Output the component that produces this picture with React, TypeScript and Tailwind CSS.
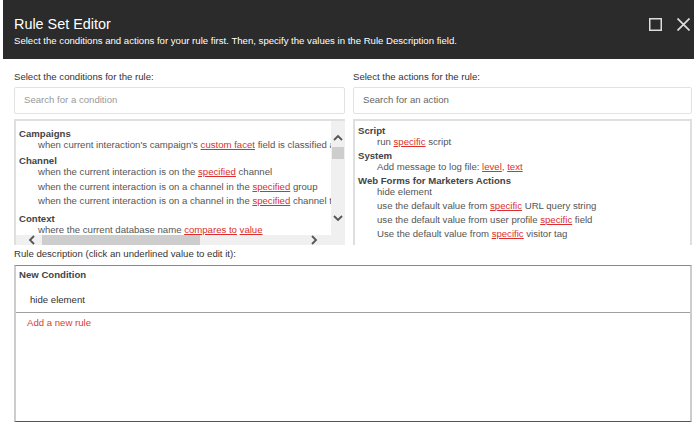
import { ReactNode } from 'react';

function Val({ children }: { children: ReactNode }) {
    return <span className="text-[#dc2f2f] underline underline-offset-1">{children}</span>;
}

function Group({ title, className, children }: { title: string; className?: string; children: ReactNode }) {
    return (
        <div className={className}>
            <div className="font-bold leading-[11px] text-[#444]">{title}</div>
            {children}
        </div>
    );
}

function Row({ className, children }: { className?: string; children: ReactNode }) {
    return <div className={`pl-[19px] leading-[11px] whitespace-nowrap ${className ?? 'mb-[3.5px]'}`}>{children}</div>;
}

// Scrollbar arrows: wide, flat chevrons
function Arrow({ points, className }: { points: string; className?: string }) {
    return (
        <svg width="10" height="10" viewBox="0 0 10 10" fill="none" stroke="#555" strokeWidth="1.8" className={className}>
            <polyline points={points} />
        </svg>
    );
}

export default function App() {
    return (
        <div className="w-[694px] h-[423px] overflow-hidden bg-white font-['Liberation_Sans',sans-serif] text-[9.6px] text-[#555]">
            {/* Header */}
            <div className="ml-[3px] h-[59px] bg-[#2b2b2b] flex justify-between pl-[11px] pr-[4px]">
                <div className="pt-[15px]">
                    <h1 className="text-[14.4px] leading-[18px] text-white">Rule Set Editor</h1>
                    <p className="mt-[2px] leading-[12px] text-white">
                        Select the conditions and actions for your rule first. Then, specify the values in the Rule Description field.
                    </p>
                </div>
                <div className="flex items-start gap-[15px] pt-[18px]">
                    <svg width="13" height="13" viewBox="0 0 13 13" fill="none" stroke="#ddd" strokeWidth="1.5">
                        <rect x="0.75" y="0.75" width="11.5" height="11.5" />
                    </svg>
                    <svg width="13" height="13" viewBox="0 0 13 13" fill="none" stroke="#ddd" strokeWidth="1.7">
                        <path d="M0.5 0.5 L12.5 12.5 M12.5 0.5 L0.5 12.5" />
                    </svg>
                </div>
            </div>

            {/* Pickers */}
            <div className="grid grid-cols-[331px_339px] gap-x-[8px] pl-[14px] pt-[12px]">
                <div>
                    <div className="h-[16px] leading-[12px] text-[#333]">Select the conditions for the rule:</div>
                    <div className="h-[27px] border border-[#e2e2e2] rounded-[2px] pl-[9px] flex items-center text-[#9a9a9a]">Search for a condition</div>
                    <div className="mt-[5px] h-[126px] border-2 border-b-0 border-r-0 border-[#dfdfdf] flex flex-col">
                        <div className="flex flex-1 min-h-0">
                            <div className="w-[315px] overflow-hidden pl-[3px] pt-[7px]">
                                <Group title="Campaigns">
                                    <Row>when current interaction's campaign's <Val>custom facet</Val> field is classified as</Row>
                                </Group>
                                <Group title="Channel" className="mt-[5px]">
                                    <Row>when the current interaction is on the <Val>specified</Val> channel</Row>
                                    <Row>when the current interaction is on a channel in the <Val>specified</Val> group</Row>
                                    <Row>when the current interaction is on a channel in the <Val>specified</Val> channel type</Row>
                                </Group>
                                <Group title="Context" className="mt-[7px]">
                                    <Row>where the current database name <Val>compares to</Val> <Val>value</Val></Row>
                                </Group>
                            </div>
                            <div className="w-[14px] bg-[#f0f0f0] flex flex-col items-center pt-[12px]">
                                <Arrow points="1,7 5,3 9,7" />
                                <div className="mt-[4px] h-[12px] w-[12px] bg-[#cdcdcd]" />
                                <Arrow points="1,3 5,7 9,3" className="mt-[54px]" />
                            </div>
                        </div>
                        <div className="h-[10px] bg-[#f0f0f0] flex items-center">
                            <Arrow points="7,1 3,5 7,9" className="ml-[11px]" />
                            <div className="ml-[5px] h-[10px] w-[158px] bg-[#cdcdcd]" />
                            <Arrow points="3,1 7,5 3,9" className="ml-[109px]" />
                        </div>
                    </div>
                </div>
                <div>
                    <div className="h-[16px] leading-[12px] text-[#333]">Select the actions for the rule:</div>
                    <div className="h-[27px] border border-[#e2e2e2] rounded-[2px] pl-[9px] flex items-center text-[#666]">Search for an action</div>
                    <div className="mt-[5px] h-[126px] border-t-2 border-x-2 border-[#dfdfdf] pl-[3px] pt-[4px]">
                        <Group title="Script">
                            <Row className="mb-[3px]">run <Val>specific</Val> script</Row>
                        </Group>
                        <Group title="System">
                            <Row className="mb-[3px]">Add message to log file: <Val>level</Val>, <Val>text</Val></Row>
                        </Group>
                        <Group title="Web Forms for Marketers Actions">
                            <Row className="mb-[3px]">hide element</Row>
                            <Row className="mb-[3px]">use the default value from <Val>specific</Val> URL query string</Row>
                            <Row className="mb-[3px]">use the default value from user profile <Val>specific</Val> field</Row>
                            <Row className="mb-[3px]">Use the default value from <Val>specific</Val> visitor tag</Row>
                        </Group>
                    </div>
                </div>
            </div>

            {/* Rule description */}
            <div className="ml-[14px] w-[678px] mt-[3px]">
                <div className="h-[17px] leading-[12px] text-[#333]">Rule description (click an underlined value to edit it):</div>
                <div className="h-[157px] border-t-[1.5px] border-t-[#888] border-b-[1.5px] border-b-[#555] border-x-2 border-x-[#ccc]">
                    <div className="h-[47px] border-b border-[#a0a0a0] pl-[3px] pt-[3px]">
                        <div className="font-bold leading-[12px] text-[#444]">New Condition</div>
                        <div className="mt-[13px] pl-[11px] leading-[12px] text-[#333]">hide element</div>
                    </div>
                    <div className="pl-[11px] pt-[4px] leading-[12px] text-[#d8402f]">Add a new rule</div>
                </div>
            </div>
        </div>
    );
}
